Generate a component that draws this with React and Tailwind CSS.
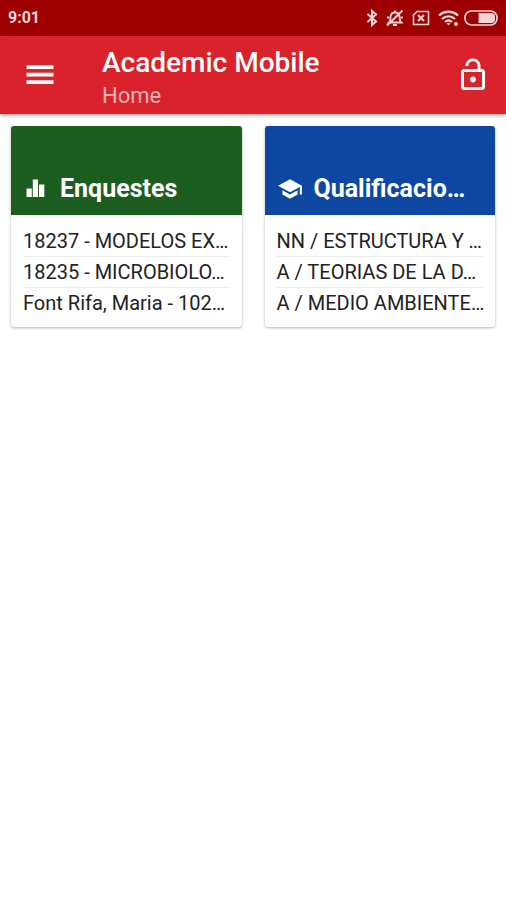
import React from 'react';
import { MdSchool } from 'react-icons/md';

const cards = [
  {
    title: 'Enquestes',
    color: 'bg-[#1b5e20]',
    icon: ChartIcon,
    items: ['18237 - MODELOS EX…', '18235 - MICROBIOLO…', 'Font Rifa, Maria - 102…'],
  },
  {
    title: 'Qualificacio…',
    color: 'bg-[#0d47a1]',
    icon: MdSchool,
    items: ['NN / ESTRUCTURA Y …', 'A / TEORIAS DE LA D…', 'A / MEDIO AMBIENTE…'],
  },
];

function ChartIcon({ className }) {
  return (
    <svg viewBox="0 0 26 26" fill="currentColor" className={className}>
      <path d="M3.500 12.500h5.300V21H3.500zM9.800 3.500h5.200V21H9.800zM16 8.500h5.300V21H16z" />
    </svg>
  );
}

function BluetoothIcon() {
  return (
    <svg viewBox="0 0 12 18" fill="none" stroke="currentColor" strokeWidth="2" className="h-[18px] w-3">
      <path d="M1.500 5 10 12.500l-4 3.500V2l4 3.500L1.500 13" />
    </svg>
  );
}

function MutedBellIcon() {
  return (
    <svg viewBox="0 0 18 18" fill="none" stroke="currentColor" strokeWidth="1.900" className="h-[18px] w-[18px]">
      <path d="M3 13.500c1.500-1.300 1.300-2.800 1.500-5.500C4.800 5 6.500 3.500 9 3.500s4.300 1.500 4.600 4.500c.2 2.700.2 4.200 1.600 5.500zM9 3.500V1.500M7 16h4M1 16.500 16.500 1.500M1 8.500h2M15 8.500h2" />
    </svg>
  );
}

function NoSimIcon() {
  return (
    <svg viewBox="0 0 18 16" fill="none" stroke="currentColor" strokeWidth="1.500" className="h-4 w-[18px]">
      <path d="M5 1.500h11.500v13h-15V5z" />
      <path d="M6 5l6 6M12 5l-6 6" strokeWidth="2" />
    </svg>
  );
}

function WifiIcon() {
  return (
    <svg viewBox="0 0 22 18" fill="none" stroke="currentColor" strokeWidth="2.300" className="h-[18px] w-[22px]">
      <path d="M1 6.500c5.500-5 13.500-5 19 0M4 10c4-3.600 9-3.600 13 0M7 13c2.200-1.900 4.800-1.900 7 0" />
      <path d="M8.500 14.200h4l-2 2.300z" fill="currentColor" stroke="none" />
      <circle cx="18" cy="15" r="2" fill="currentColor" stroke="none" />
    </svg>
  );
}

function BatteryIcon() {
  return (
    <svg viewBox="0 0 34 16" className="h-4 w-[34px]">
      <rect x="1" y="1" width="32" height="14" rx="6.500" fill="none" stroke="currentColor" strokeWidth="1.700" />
      <path d="M14.500 3H27a4 4 0 0 1 4 4v2a4 4 0 0 1-4 4H14.500z" fill="currentColor" />
    </svg>
  );
}

function LockOpenIcon() {
  return (
    <svg viewBox="0 0 24 24" fill="currentColor" className="h-9 w-9">
      <path d="M12 17c1.100 0 2-.9 2-2s-.9-2-2-2-2 .9-2 2 .9 2 2 2zm6-9h-1V6c0-2.760-2.240-5-5-5S7 3.240 7 6h1.900c0-1.710 1.390-3.100 3.100-3.100s3.100 1.390 3.100 3.100v2H6c-1.100 0-2 .9-2 2v10c0 1.100.9 2 2 2h12c1.100 0 2-.9 2-2V10c0-1.100-.9-2-2-2zm0 12H6V10h12v10z" />
    </svg>
  );
}

function StatusBar() {
  return (
    <div className="flex h-9 items-center justify-between bg-[#9f0000] px-2 text-[#f6d5d5]">
      <span className="text-base font-bold">9:01</span>
      <div className="flex items-center">
        <BluetoothIcon />
        <span className="ml-2 mr-2">
          <MutedBellIcon />
        </span>
        <NoSimIcon />
        <span className="ml-2 mr-1">
          <WifiIcon />
        </span>
        <BatteryIcon />
      </div>
    </div>
  );
}

function Header() {
  return (
    <header className="flex items-center bg-[#da222c] py-1 pl-[22px] pr-[15px] text-white shadow-[0_1px_4px_rgba(0,0,0,0.45)]">
      <button type="button" aria-label="Menu" className="mr-11">
        <svg viewBox="0 0 24 24" fill="currentColor" className="h-9 w-9">
          <path d="M3 18h18v-2.500H3V18zm0-5h18v-2.500H3V13zm0-7.500V8h18V5.500H3z" />
        </svg>
      </button>
      <div className="min-w-0 flex-1 pt-1">
        <h1 className="truncate text-[28px] font-medium leading-[38px]">Academic Mobile</h1>
        <p className="truncate text-[22px] leading-7 text-[#f9b4b6]">Home</p>
      </div>
      <button type="button" aria-label="Unlock">
        <LockOpenIcon />
      </button>
    </header>
  );
}

function Card({ title, color, icon: Icon, items }) {
  return (
    <section className="min-w-0 overflow-hidden rounded-[3px] bg-white shadow-[0_1px_3px_rgba(0,0,0,0.3)]">
      <div className={`flex items-center px-3 pb-2 pt-[45px] text-white ${color}`}>
        <Icon className="mr-[11px] h-[26px] w-[26px] shrink-0" />
        <h2 className="truncate text-[25px] font-bold leading-9">{title}</h2>
      </div>
      <ul className="px-3 pb-[9px] pt-[11px]">
        {items.map((item) => (
          <li
            key={item}
            className="whitespace-nowrap border-b border-[#eeeeee] text-xl leading-[30px] text-[#222222] last:border-b-0"
          >
            {item}
          </li>
        ))}
      </ul>
    </section>
  );
}

function App() {
  return (
    <div className="min-h-screen bg-white font-['Roboto',sans-serif]">
      <StatusBar />
      <Header />
      <main className="grid grid-cols-2 gap-[23px] px-[11px] pt-3">
        {cards.map((card) => (
          <Card key={card.title} {...card} />
        ))}
      </main>
    </div>
  );
}

export default App;
